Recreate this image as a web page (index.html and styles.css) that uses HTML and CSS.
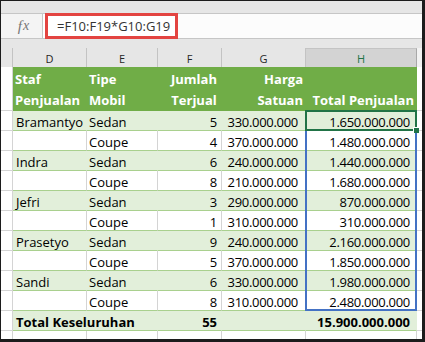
FILE: index.html
```html
<!DOCTYPE html>
<html>
<head>
<meta charset="utf-8">
<link rel="stylesheet" href="styles.css">
</head>
<body>
<div class="frame">
  <div class="topbar">
    <div class="fbar">
      <div class="fx"><span class="fx-f">f</span><span class="fx-x">x</span></div>
      <div class="gap"></div>
      <div class="formula">=F10:F19*G10:G19</div>
      <div class="rest"></div>
    </div>
  </div>
  <div class="sheet">
    <div class="row colhdr">
      <div></div><div>D</div><div>E</div><div>F</div><div>G</div><div class="sel">H</div><div class="edge"></div>
    </div>
    <div class="row thead">
      <div class="side"></div>
      <div class="tl">Staf<br>Penjualan</div>
      <div class="tl">Tipe<br>Mobil</div>
      <div class="tc">Jumlah<br>Terjual</div>
      <div class="tr">Harga<br>Satuan</div>
      <div class="tr">&nbsp;<br>Total Penjualan</div>
      <div class="side edge"></div>
    </div>
    <div class="row band">
      <div class="side"></div><div class="d">Bramantyo</div><div class="e">Sedan</div><div class="f">5</div><div class="g">330.000.000</div><div class="h">1.650.000.000</div><div class="side edge"></div>
    </div>
    <div class="row plain">
      <div class="side"></div><div class="d"></div><div class="e">Coupe</div><div class="f">4</div><div class="g">370.000.000</div><div class="h">1.480.000.000</div><div class="side edge"></div>
    </div>
    <div class="row band">
      <div class="side"></div><div class="d">Indra</div><div class="e">Sedan</div><div class="f">6</div><div class="g">240.000.000</div><div class="h">1.440.000.000</div><div class="side edge"></div>
    </div>
    <div class="row plain">
      <div class="side"></div><div class="d"></div><div class="e">Coupe</div><div class="f">8</div><div class="g">210.000.000</div><div class="h">1.680.000.000</div><div class="side edge"></div>
    </div>
    <div class="row band">
      <div class="side"></div><div class="d">Jefri</div><div class="e">Sedan</div><div class="f">3</div><div class="g">290.000.000</div><div class="h">870.000.000</div><div class="side edge"></div>
    </div>
    <div class="row plain">
      <div class="side"></div><div class="d"></div><div class="e">Coupe</div><div class="f">1</div><div class="g">310.000.000</div><div class="h">310.000.000</div><div class="side edge"></div>
    </div>
    <div class="row band">
      <div class="side"></div><div class="d">Prasetyo</div><div class="e">Sedan</div><div class="f">9</div><div class="g">240.000.000</div><div class="h">2.160.000.000</div><div class="side edge"></div>
    </div>
    <div class="row plain">
      <div class="side"></div><div class="d"></div><div class="e">Coupe</div><div class="f">5</div><div class="g">370.000.000</div><div class="h">1.850.000.000</div><div class="side edge"></div>
    </div>
    <div class="row band">
      <div class="side"></div><div class="d">Sandi</div><div class="e">Sedan</div><div class="f">6</div><div class="g">330.000.000</div><div class="h">1.980.000.000</div><div class="side edge"></div>
    </div>
    <div class="row plain">
      <div class="side"></div><div class="d"></div><div class="e">Coupe</div><div class="f">8</div><div class="g">310.000.000</div><div class="h">2.480.000.000</div><div class="side edge"></div>
    </div>
    <div class="row band total">
      <div class="side"></div><div class="d span2">Total Keseluruhan</div><div class="f">55</div><div class="g"></div><div class="h">15.900.000.000</div><div class="side edge"></div>
    </div>
    <div class="row blank">
      <div></div><div></div><div></div><div></div><div></div><div></div><div class="edge"></div>
    </div>
    <div class="range"></div>
    <div class="active"><div class="handle"></div></div>
  </div>
</div>
</body>
</html>
```
FILE: styles.css
```css
* { box-sizing: border-box; margin: 0; padding: 0; }
html, body { width: 425px; height: 342px; overflow: hidden; background: #fff; }
body { font-family: "Open Sans", sans-serif; color: #000; }

.frame {
  width: 425px; height: 342px;
  border-style: solid; border-color: #1c1c1c;
  border-width: 1px 3px 3px 1px;
  background: #e6e6e6;
  display: flex; flex-direction: column;
}

.topbar { height: 47px; padding-top: 12px; }
.fbar { display: flex; height: 26px; }
.fx {
  width: 42px; background: #f4f4f4;
  border-top: 1px solid #c6c6c6; border-bottom: 1px solid #c6c6c6; border-right: 1px solid #c6c6c6;
  display: flex; align-items: center; justify-content: center; padding-left: 4px;
  font-family: "Liberation Serif", serif; font-style: italic; color: #767676;
  font-size: 15px; line-height: 1;
}
.fx-f { margin-right: 1px; }
.fx-x { font-size: 14px; }
.gap { width: 2px; background: #fff; border-top: 1px solid #c6c6c6; border-bottom: 1px solid #c6c6c6; }
.formula {
  width: 133px; border: 3px solid #e34441; background: #fff;
  font-size: 13px; color: #333; padding-left: 9px;
  display: flex; align-items: center; white-space: nowrap;
}
.rest { flex: 1; background: #fcfcfc; border-top: 1px solid #c6c6c6; border-bottom: 1px solid #c6c6c6; }

.sheet { position: relative; flex: 1; }
.row { display: grid; grid-template-columns: 12px 74px 71px 64px 84px 111px 1fr; }
.row > div {
  border-right: 1px solid #d4d4d4; border-bottom: 1px solid #d4d4d4;
  white-space: nowrap; overflow: hidden; background: #fff;
}
.row > .edge { border-right: 0; }

.colhdr { height: 19px; }
.colhdr > div {
  background: #e6e6e6; border-right-color: #c3c3c3; border-bottom: 0;
  text-align: center; font-size: 11px; line-height: 16px; padding-top: 3px; color: #262626;
}
.colhdr > .sel { background: #d3d3d3; color: #217346; border-right-color: #a8a8a8; border-top: 1px solid #c4c4c4; padding-top: 2px; }
.colhdr > .edge { background: #f2f2f2; }

.thead { height: 44px; }
.thead > div {
  background: #70ad47; color: #fff; font-weight: 700; font-size: 13px;
  line-height: 21px; padding-top: 2px; border-right-color: #70ad47; border-bottom: 0;
}
.thead > .side { background: #fff; border-right-color: #d4d4d4; border-bottom: 1px solid #d4d4d4; }
.thead > .edge { border-right: 0; }
.tl { padding-left: 2px; }
.tc { text-align: center; padding-left: 9px; }
.tr { text-align: right; padding-right: 2px; }

.band, .plain, .total { height: 20px; }
.band > div, .plain > div, .total > div {
  font-size: 13px; line-height: 16px; padding-top: 3px;
  border-bottom-color: #a9d08e;
}
.row > .side { border-bottom-color: #d4d4d4; border-right-color: #d4d4d4; background: #fff; }
.band > div { background: #e2efda; border-right-color: #e2efda; }
.total > div { font-weight: 700; }
.span2 { grid-column: span 2; }

.d { padding-left: 3px; }
.e { padding-left: 2px; }
.f, .g, .h { text-align: right; letter-spacing: -0.3px; }
.f { padding-right: 4px; }
.g { padding-right: 7px; }
.h { padding-right: 6px; }
.total .f, .total .h { letter-spacing: 0; }

.blank { height: 8px; }
.blank > div { border-bottom: 0; }

.range {
  position: absolute; left: 304px; top: 83px; width: 112px; height: 180px;
  border: 2px solid #4472c4; border-top: 0;
}
.active {
  position: absolute; left: 304px; top: 62px; width: 112px; height: 21px;
  border: 2px solid #217346;
}
.handle {
  position: absolute; right: -4px; bottom: -4px; width: 6px; height: 6px;
  background: #217346; border-left: 1px solid #fff; border-top: 1px solid #fff;
}
```
